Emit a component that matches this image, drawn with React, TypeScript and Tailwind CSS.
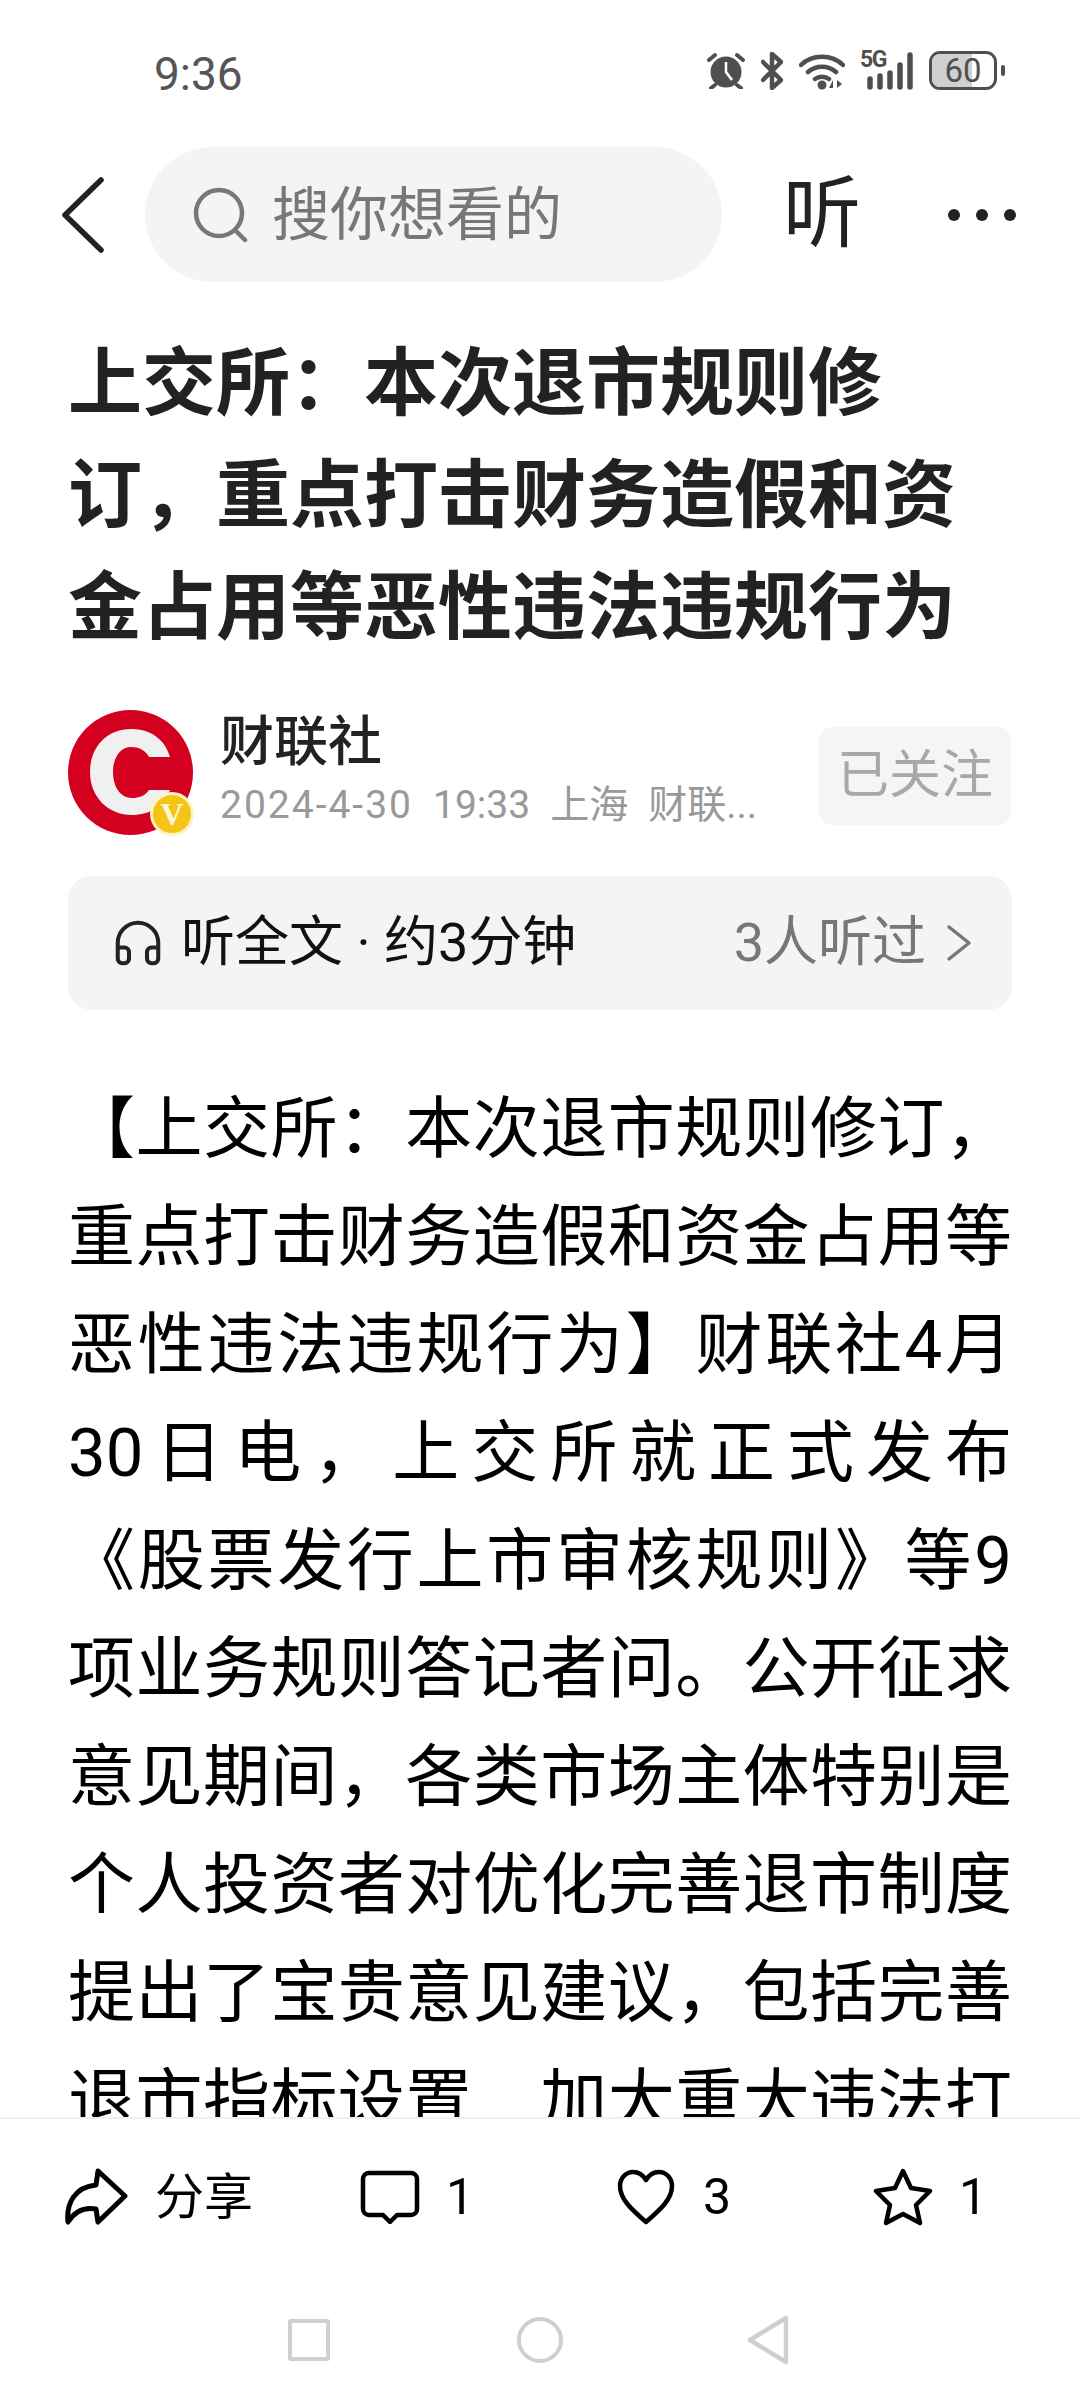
import { Headphones } from "lucide-react"

const paragraphStart =
  "【上交所：本次退市规则修订，重点打击财务造假和资金占用等恶性违法违规行为】财联社4月30日电，上交所就正式发布《股票发行上市审核规则》等9项业务规则答记者问。公开征求意见期间，各类市场主体特别是个人投资者对优化完善退市制度提出了宝贵意见建议，包括完善退市指标设置"
const paragraphEnd = "加大重大违法打击力度。"

function StatusIcons() {
  return (
    <div className="flex items-center text-[#4f4f4f]">
      {/* alarm */}
      <svg width="40" height="37" viewBox="0 0 40 37" className="mr-[15px]">
        <circle cx="20" cy="20" r="15.5" fill="currentColor" />
        <path d="M20 10v10l6 8" stroke="#fff" strokeWidth="2.5" fill="none" />
        <path d="M3 8l6-5M37 8l-6-5M9 33l-4 3M31 33l4 3" stroke="currentColor" strokeWidth="4" strokeLinecap="round" />
      </svg>
      {/* bluetooth */}
      <svg width="22" height="38" viewBox="0 0 22 38" className="mr-[16px]">
        <path
          d="M2 10l18 18-9 8V2l9 8L2 28"
          stroke="currentColor"
          strokeWidth="4.5"
          fill="none"
          strokeLinejoin="round"
          strokeLinecap="round"
        />
      </svg>
      {/* wifi */}
      <svg width="46" height="38" viewBox="0 0 46 38" className="mr-[15px]">
        <path d="M2 13c11-11 31-11 42 0M9 20c8-7 20-7 28 0M16 27c4-3 10-3 14 0" stroke="currentColor" strokeWidth="4.5" fill="none" strokeLinecap="round" />
        <circle cx="23" cy="33" r="4.5" fill="currentColor" />
        <path d="M34 36v-8l-4 8zM38 28v8l5-4z" fill="currentColor" />
      </svg>
      {/* 5G + signal */}
      <div className="relative w-[55px] h-[38px] mr-[14px]">
        <span className="absolute left-0 top-[-4px] text-[23px] leading-[24px] font-bold tracking-[-1.5px]">5G</span>
        <svg width="55" height="38" viewBox="0 0 55 38" className="absolute inset-0">
          <path d="M10 27v8M20 24v11M30 21v14M40 13v22M50 3v32" stroke="currentColor" strokeWidth="5.5" strokeLinecap="round" />
        </svg>
      </div>
      {/* battery */}
      <div className="relative flex items-center justify-center w-[68px] h-[39px] rounded-[11px] border-[3px] border-[#4f4f4f] overflow-hidden">
        <div className="absolute left-0 top-0 bottom-0 w-[40px] bg-[#d0d0d0]" />
        <span className="relative text-[33px] leading-none text-[#4f4f4f]">60</span>
      </div>
      <div className="ml-[4px] w-[4px] h-[11px] rounded-full bg-[#4f4f4f]" />
    </div>
  )
}

export default function App() {
  return (
    <div className="w-[1080px] h-[2400px] bg-white flex flex-col overflow-hidden font-['Roboto','Noto_Sans_CJK_SC',sans-serif]">
      <main className="flex-1 min-h-0 overflow-hidden">
        {/* status bar */}
        <div className="h-[147px] pt-[51px] pl-[154px] pr-[75px] flex items-start justify-between">
          <span className="text-[46px] leading-[46px] text-[#555]">9:36</span>
          <StatusIcons />
        </div>

        {/* top bar */}
        <div className="h-[135px] flex items-center pl-[60px] pr-[64px]">
          <svg width="46" height="78" viewBox="0 0 46 78" className="mr-[39px] text-[#222]">
            <path d="M41 4L5 39l36 35" stroke="currentColor" strokeWidth="5.5" fill="none" strokeLinecap="round" strokeLinejoin="round" />
          </svg>
          <div className="w-[577px] h-[135px] rounded-full bg-[#f3f4f6] flex items-center pl-[48px]">
            <svg width="56" height="56" viewBox="0 0 56 56" className="mr-[23px] text-[#777]">
              <circle cx="26" cy="26" r="23" stroke="currentColor" strokeWidth="4.5" fill="none" />
              <path d="M42 43l10 10" stroke="currentColor" strokeWidth="4.5" strokeLinecap="round" />
            </svg>
            <span className="text-[58px] leading-none text-[#777]">搜你想看的</span>
          </div>
          <span className="ml-[61px] text-[78px] leading-none text-[#222]">听</span>
          <div className="ml-auto flex gap-[16px]">
            <div className="w-[12px] h-[12px] rounded-full bg-[#222]" />
            <div className="w-[12px] h-[12px] rounded-full bg-[#222]" />
            <div className="w-[12px] h-[12px] rounded-full bg-[#222]" />
          </div>
        </div>

        <div className="px-[68px]">
          <h1 className="mt-[46px] text-[74px] leading-[112px] font-bold text-[#222]">
            上交所：本次退市规则修订，重点打击财务造假和资金占用等恶性违法违规行为
          </h1>

          {/* author row */}
          <div className="mt-[46px] h-[125px] flex items-center">
            <div className="relative w-[125px] h-[125px] shrink-0">
              <svg width="125" height="125" viewBox="0 0 125 125">
                <circle cx="62.5" cy="62.5" r="62.5" fill="#d4001f" />
                <path
                  d="M102 47C97 29 82 19 63 19C38 19 22 38 22 62C22 87 40 105 64 105C82 105 96 96 102 80L81 80C77 86 71 88 64 88C52 88 45 76 45 62C45 48 52 37 63 37C71 37 77 40 81 47Z"
                  fill="#f0f0f0"
                />
              </svg>
              <div className="absolute right-[-1px] bottom-[-1px] w-[44px] h-[44px] rounded-full bg-[#f6c417] border-[3px] border-[#fff3c4] flex items-center justify-center">
                <span className="text-[32px] leading-none text-[#fff6d8] font-['Liberation_Serif',serif] font-bold">V</span>
              </div>
            </div>
            <div className="ml-[27px] w-[545px] -mt-[4px]">
              <div className="text-[54px] leading-[60px] text-[#222] font-medium">财联社</div>
              <div className="mt-[9px] flex gap-[20px] text-[39px] leading-[46px] text-[#999] whitespace-nowrap">
                <span className="tracking-[2px]">2024-4-30</span>
                <span>19:33</span>
                <span>上海</span>
                <span>财联...</span>
              </div>
            </div>
            <div className="ml-auto mr-[1px] mt-[6px] w-[192px] h-[98px] rounded-[14px] bg-[#f4f5f6] flex items-center justify-center text-[52px] leading-none text-[#a8a8a8]">
              已关注
            </div>
          </div>

          {/* listen bar */}
          <div className="mt-[41px] h-[134px] rounded-[24px] bg-[#f3f4f6] flex items-center pl-[43px] pr-[40px]">
            <Headphones size={54} strokeWidth={1.8} className="text-[#222] mr-[16px]" />
            <span className="text-[54px] leading-none text-[#111]">听全文 · 约3分钟</span>
            <span className="ml-auto text-[54px] leading-none text-[#777]">3人听过</span>
            <svg width="26" height="38" viewBox="0 0 26 38" className="ml-[20px] text-[#777]">
              <path d="M3 3l20 16L3 35" stroke="currentColor" strokeWidth="3.5" fill="none" strokeLinecap="round" strokeLinejoin="round" />
            </svg>
          </div>

          {/* article, the comma on the last visible line sits below the cut in the original font */}
          <p className="mt-[65px] text-[67px] leading-[108px] text-black text-justify">
            {paragraphStart}
            <span className="relative top-[12px]">，</span>
            {paragraphEnd}
          </p>
        </div>
      </main>

      {/* bottom actions */}
      <div className="h-[283px] shrink-0 border-t-2 border-[#f0f0f0] bg-white flex flex-col">
        <div className="mt-[48px] pl-[65px] grid grid-cols-[295px_257px_256px_auto] items-center text-black">
          <div className="flex items-center">
            <svg width="66" height="60" viewBox="0 0 66 60">
              <path
                d="M33 4L60 29L33 55L31 42C20 40 10 44 3 55C1 36 10 20 31 18Z"
                stroke="currentColor"
                strokeWidth="5"
                fill="none"
                strokeLinejoin="round"
              />
            </svg>
            <span className="ml-[24px] text-[49px] leading-none">分享</span>
          </div>
          <div className="flex items-center">
            <svg width="60" height="54" viewBox="0 0 60 54">
              <path
                d="M9 3h42a6 6 0 0 1 6 6v30a6 6 0 0 1-6 6H37l-7 7-7-7H9a6 6 0 0 1-6-6V9a6 6 0 0 1 6-6z"
                stroke="currentColor"
                strokeWidth="4.5"
                fill="none"
                strokeLinejoin="round"
              />
            </svg>
            <span className="ml-[26px] text-[50px] leading-none">1</span>
          </div>
          <div className="flex items-center">
            <svg width="58" height="56" viewBox="0 0 58 56">
              <path
                d="M29 53C14 40 3 30 3 17 3 9 9 3 16 3c5 0 10 3 13 8 3-5 8-8 13-8 7 0 13 6 13 14 0 13-11 23-26 36z"
                stroke="currentColor"
                strokeWidth="4.5"
                fill="none"
                strokeLinejoin="round"
              />
            </svg>
            <span className="ml-[28px] text-[50px] leading-none">3</span>
          </div>
          <div className="flex items-center">
            <svg width="60" height="58" viewBox="0 0 60 58">
              <path
                d="M30 3l8 17 19 3-14 14 4 18-17-9-17 9 4-18L3 23l19-3z"
                stroke="currentColor"
                strokeWidth="4.5"
                fill="none"
                strokeLinejoin="round"
              />
            </svg>
            <span className="ml-[26px] text-[50px] leading-none">1</span>
          </div>
        </div>

        {/* nav bar */}
        <div className="mt-[88px] flex items-center pl-[288px]">
          <div className="w-[42px] h-[42px] rounded-[3px] border-[4px] border-[#cfcfcf]" />
          <div className="ml-[187px] w-[46px] h-[46px] rounded-full border-[4px] border-[#cfcfcf]" />
          <svg width="44" height="50" viewBox="0 0 44 50" className="ml-[183px] text-[#cfcfcf]">
            <path d="M40 3L4 25l36 22z" stroke="currentColor" strokeWidth="4.5" fill="none" strokeLinejoin="round" />
          </svg>
        </div>
      </div>
    </div>
  )
}
